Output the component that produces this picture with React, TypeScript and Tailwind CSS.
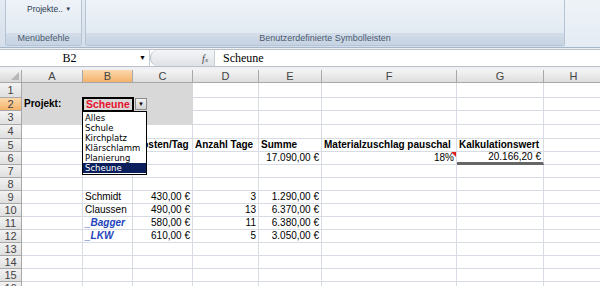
import React from "react";

type C = { t?: string; r?: boolean; b?: boolean; cls?: string };

const colW = [61, 50, 60, 66, 63, 135, 87, 60];
const letters = ["A", "B", "C", "D", "E", "F", "G", "H"];

const rows: Record<number, Record<number, C>> = {
  2: { 0: { t: "Projekt:", b: true } },
  5: {
    2: { t: "Kosten/Tag", b: true },
    3: { t: "Anzahl Tage", b: true },
    4: { t: "Summe", b: true },
    5: { t: "Materialzuschlag pauschal", b: true },
    6: { t: "Kalkulationswert", b: true },
  },
  6: {
    4: { t: "17.090,00 €", r: true },
    5: { t: "18%", r: true },
    6: { t: "20.166,20 €", r: true },
  },
  9: { 1: { t: "Schmidt" }, 2: { t: "430,00 €", r: true }, 3: { t: "3", r: true }, 4: { t: "1.290,00 €", r: true } },
  10: { 1: { t: "Claussen" }, 2: { t: "490,00 €", r: true }, 3: { t: "13", r: true }, 4: { t: "6.370,00 €", r: true } },
  11: {
    1: { t: "_Bagger", cls: "italic font-bold text-[#2244bb]" },
    2: { t: "580,00 €", r: true },
    3: { t: "11", r: true },
    4: { t: "6.380,00 €", r: true },
  },
  12: {
    1: { t: "_LKW", cls: "italic font-bold text-[#2244bb]" },
    2: { t: "610,00 €", r: true },
    3: { t: "5", r: true },
    4: { t: "3.050,00 €", r: true },
  },
};

const items = ["Alles", "Schule", "Kirchplatz", "Klärschlamm", "Planierung", "Scheune"];

function Ribbon() {
  return (
    <div className="h-[48px] flex bg-gradient-to-b from-[#e4ebf3] to-[#d5dfea] border-b border-[#a7b7cb] font-['Liberation_Sans',Arial,sans-serif] text-[9px] text-[#3b4b60]">
      <div className="ml-[5px] w-[77px] h-[46px] flex flex-col border border-t-0 border-[#b5c3d4] rounded-b-[3px] bg-gradient-to-b from-[#eef3f8] to-[#dde6ef]">
        <div className="flex-1 pt-[3px] pl-[21px] whitespace-nowrap text-[8.5px] text-[#2c3b50]">
          Projekte.. <span className="text-[6px] align-middle">▼</span>
        </div>
        <div className="h-[12px] flex items-center justify-center bg-gradient-to-b from-[#d3dde9] to-[#c6d3e2] text-[#4a5a70]">
          Menübefehle
        </div>
      </div>
      <div className="ml-[3px] w-[480px] h-[46px] flex flex-col border border-t-0 border-[#b5c3d4] rounded-b-[3px] bg-gradient-to-b from-[#eef3f8] to-[#dde6ef]">
        <div className="flex-1" />
        <div className="h-[12px] flex items-center justify-center bg-gradient-to-b from-[#d3dde9] to-[#c6d3e2] text-[#4a5a70]">
          Benutzerdefinierte Symbolleisten
        </div>
      </div>
      <div className="flex-1 bg-gradient-to-b from-[#eef3f8] to-[#e4ebf3]" />
    </div>
  );
}

function FormulaBar() {
  return (
    <div className="h-[22px] flex flex-col bg-[#eef0f3] pt-[1px]">
      <div className="h-[18px] flex items-stretch border-y border-[#b9c0c8] bg-white font-['Liberation_Serif','Times_New_Roman',serif] text-[12px] text-black">
        <div className="w-[150px] flex items-center justify-center relative border-r border-[#c8ced6]">
          <span className="ml-[-10px]">B2</span>
          <span className="absolute right-[3px] text-[7px]">▼</span>
        </div>
        <div className="w-[64px] flex items-center justify-end pr-[6px] bg-gradient-to-b from-[#f4f5f7] to-[#dfe2e6] rounded-l-[9px] border-l border-[#b9c0c8]">
          <span className="italic text-[10px] text-[#444]">f<span className="text-[7px]">x</span></span>
        </div>
        <div className="flex-1 flex items-center pl-[8px] border-l border-[#c8ced6]">Scheune</div>
      </div>
    </div>
  );
}

function Grid() {
  const rowH = (n: number) =>
    n === 1 ? "h-[15px]" : n === 3 ? "h-[14px]" : n === 4 ? "h-[14px]" : "h-[13px]";
  return (
    <div className="relative font-['Liberation_Sans',Arial,sans-serif] text-[10px] text-black">
      <div className="flex h-[13px] text-[#444] text-[11px]">
        <div className="w-[22px] shrink-0 border-r border-b border-[#a8a8a8] bg-gradient-to-b from-[#f2f2f2] to-[#d9d9d9] relative">
          <div className="absolute right-[2px] bottom-[2px] w-0 h-0 border-l-[8px] border-l-transparent border-b-[8px] border-b-[#b7b7b7]" />
        </div>
        {letters.map((l, i) => (
          <div
            key={l}
            style={{ width: colW[i] }}
            className={
              "shrink-0 flex items-center justify-center border-r border-b border-[#a8a8a8] leading-none " +
              (i === 1 ? "bg-gradient-to-b from-[#fbd9ac] to-[#f3b26a]" : "bg-gradient-to-b from-[#f4f4f4] to-[#dedede]")
            }
          >
            {l}
          </div>
        ))}
      </div>
      {Array.from({ length: 16 }, (_, k) => k + 1).map((n) => (
        <div key={n} className={"flex " + rowH(n)}>
          <div
            className={
              "w-[22px] shrink-0 flex items-center justify-center border-r border-b border-[#a8a8a8] text-[#444] text-[11px] leading-none " +
              (n === 2 ? "bg-gradient-to-b from-[#fbd9ac] to-[#f3b26a]" : "bg-gradient-to-b from-[#f2f2f2] to-[#e0e0e0]")
            }
          >
            {n}
          </div>
          {colW.map((w, i) => {
            const c = rows[n]?.[i];
            const gray = n <= 3 && i <= 2;
            return (
              <div
                key={i}
                style={{ width: w }}
                className={
                  "shrink-0 relative flex items-center whitespace-nowrap px-[2px] leading-none border-b border-r " +
                  (gray ? "bg-[#d8d8d8] border-[#d8d8d8] " : "border-[#d6dbe4] ") +
                  (n === 6 && i === 6 ? "border-b-[3px] border-b-[#666] " : "") +
                  (c?.r ? "justify-end " : "") +
                  (c?.b ? "font-bold " : "")
                }
              >
                {c && <span className={c.cls}>{c.t}</span>}
                {n === 6 && i === 5 && (
                  <div className="absolute right-0 top-0 w-0 h-0 border-l-[5px] border-l-transparent border-t-[5px] border-t-[#e02020]" />
                )}
              </div>
            );
          })}
        </div>
      ))}

      {/* B2 active cell */}
      <div className="absolute left-[82px] top-[27px] w-[52px] h-[15px] border-2 border-black bg-[#d8d8d8] flex items-center pl-[2px] font-bold text-[#e8102a] text-[10.5px] leading-none">
        Scheune
      </div>
      {/* dropdown button */}
      <div className="absolute left-[135px] top-[28px] w-[12px] h-[12px] border border-[#8c8c8c] bg-gradient-to-b from-[#f4f4f4] to-[#d2d2d2] flex items-center justify-center text-[6px] text-black">
        ▼
      </div>
      {/* dropdown list */}
      <div className="absolute left-[82px] top-[41px] w-[65px] border border-black bg-white py-[1px] font-['DejaVu_Sans','Liberation_Sans',sans-serif] text-[8.5px] leading-[10px]">
        {items.map((t) => (
          <div key={t} className={"pl-[2px] h-[10px] " + (t === "Scheune" ? "bg-[#0a1f5c] text-white" : "text-black")}>
            {t}
          </div>
        ))}
      </div>
    </div>
  );
}

export default function App() {
  return (
    <div className="w-[600px] h-[286px] overflow-hidden bg-white">
      <Ribbon />
      <FormulaBar />
      <Grid />
    </div>
  );
}
